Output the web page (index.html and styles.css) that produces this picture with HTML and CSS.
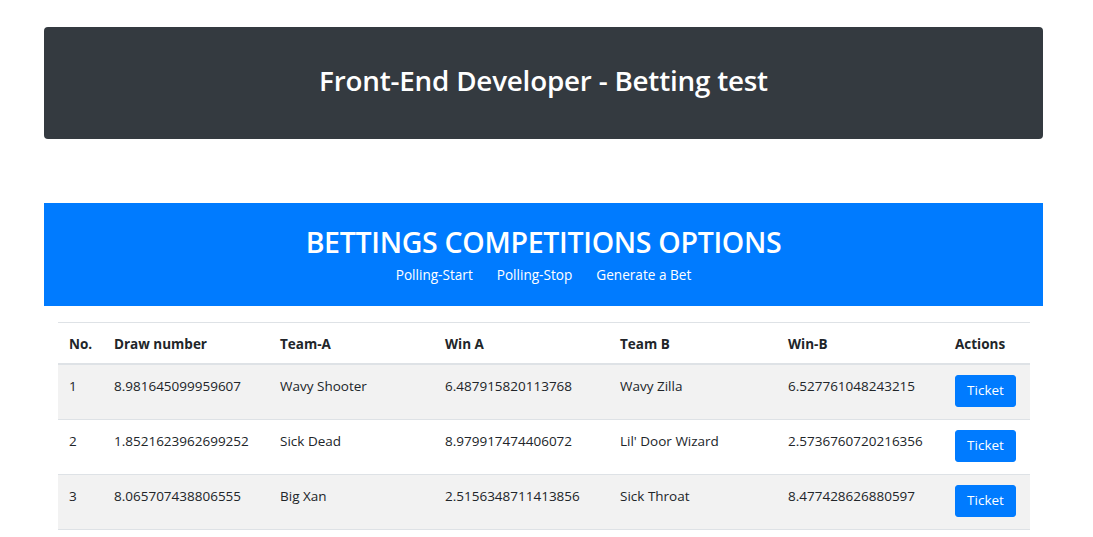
FILE: index.html
```html
<!DOCTYPE html>
<html lang="en">
<head>
<meta charset="utf-8">
<title>Betting test</title>
<link rel="stylesheet" href="styles.css">
</head>
<body>
<div class="page">
  <header class="hero">
    <h1 class="hero-title">Front-End Developer - Betting test</h1>
  </header>
  <section class="options">
    <h2 class="options-title">BETTINGS COMPETITIONS OPTIONS</h2>
    <nav class="options-links">
      <a href="#">Polling-Start</a>
      <a href="#">Polling-Stop</a>
      <a href="#">Generate a Bet</a>
    </nav>
  </section>
  <div class="table-wrap">
    <table class="bets">
      <colgroup>
        <col class="c-no"><col class="c-draw"><col class="c-ta"><col class="c-wa"><col class="c-tb"><col class="c-wb"><col class="c-act">
      </colgroup>
      <thead>
        <tr><th>No.</th><th>Draw number</th><th>Team-A</th><th>Win A</th><th>Team B</th><th>Win-B</th><th>Actions</th></tr>
      </thead>
      <tbody>
        <tr><td>1</td><td>8.981645099959607</td><td>Wavy Shooter</td><td>6.487915820113768</td><td>Wavy Zilla</td><td>6.527761048243215</td><td><button class="btn">Ticket</button></td></tr>
        <tr><td>2</td><td>1.8521623962699252</td><td>Sick Dead</td><td>8.979917474406072</td><td>Lil' Door Wizard</td><td>2.5736760720216356</td><td><button class="btn">Ticket</button></td></tr>
        <tr><td>3</td><td>8.065707438806555</td><td>Big Xan</td><td>2.5156348711413856</td><td>Sick Throat</td><td>8.477428626880597</td><td><button class="btn">Ticket</button></td></tr>
      </tbody>
    </table>
  </div>
</div>
</body>
</html>
```
FILE: styles.css
```css
* { box-sizing: border-box; }
html, body { margin: 0; padding: 0; background: #fff; }
body {
  font-family: "Open Sans", "Noto Sans", "Liberation Sans", sans-serif;
  color: #212529;
  font-size: 14px;
}
.page {
  width: 999px;
  margin-left: 44px;
  padding-top: 27px;
}
.hero {
  background: #343a40;
  border-radius: 4px;
  height: 112px;
  display: flex;
  align-items: center;
  justify-content: center;
  padding-bottom: 4px;
}
.hero-title {
  margin: 0;
  color: #fff;
  font-size: 27.8px;
  font-weight: 600;
  line-height: 1.2;
  letter-spacing: -0.2px;
}
.options {
  margin-top: 64px;
  background: #007bff;
  height: 103px;
  display: flex;
  flex-direction: column;
  align-items: center;
  padding-top: 21px;
}
.options-title {
  margin: 0;
  color: #fff;
  font-size: 28.5px;
  font-weight: 600;
  line-height: 36px;
  letter-spacing: -0.3px;
}
.options-links {
  display: flex;
  gap: 24px;
  margin-top: 5px;
}
.options-links a {
  color: #fff;
  text-decoration: none;
  font-size: 13.6px;
  line-height: 20px;
}
.table-wrap {
  margin-top: 16px;
  padding: 0 13px 0 14px;
}
.bets {
  width: 100%;
  border-collapse: collapse;
  table-layout: fixed;
}
.c-no { width: 45px; }
.c-draw { width: 166px; }
.c-ta { width: 165px; }
.c-wa { width: 175px; }
.c-tb { width: 168px; }
.c-wb { width: 167px; }
.c-act { width: 86px; }
.bets th, .bets td {
  text-align: left;
  vertical-align: top;
  padding: 11px 11px 11px 11px;
  border-top: 1px solid #dee2e6;
  white-space: nowrap;
}
.bets th {
  font-weight: 700;
  font-size: 13.5px;
  line-height: 18px;
  padding-top: 12px;
  padding-bottom: 10px;
  border-bottom: 2px solid #dee2e6;
}
.bets td {
  font-size: 13.5px;
  line-height: 21px;
  height: 55px;
}
.bets tbody tr:nth-child(odd) { background: #f2f2f2; }
.bets tbody tr:last-child td { border-bottom: 1px solid #dee2e6; }
.btn {
  font-family: inherit;
  font-size: 13.5px;
  line-height: 21px;
  color: #fff;
  background: #007bff;
  border: 1px solid #007bff;
  border-radius: 3px;
  padding: 4px 8px 5px;
  width: 61px;
  margin-top: -1px;
  cursor: pointer;
}
```
